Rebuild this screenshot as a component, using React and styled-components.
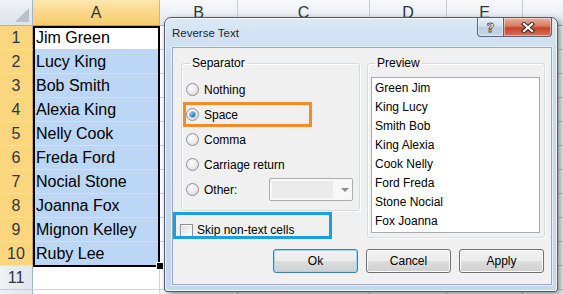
import React from 'react';
import styled, { createGlobalStyle } from 'styled-components';

const GlobalStyle = createGlobalStyle`
  html, body { margin: 0; padding: 0; width: 563px; height: 294px; overflow: hidden; background: #fff; }
  body { font-family: "Liberation Sans", Arial, sans-serif; }
  * { box-sizing: border-box; }
`;

const Page = styled.div`
  position: relative;
  width: 563px;
  height: 294px;
  overflow: hidden;
`;

/* ---------- spreadsheet ---------- */
const COLS = [33, 127, 78, 132, 77, 76, 110];
const LETTERS = ['A', 'B', 'C', 'D', 'E', ''];
const NAMES = ['Jim Green', 'Lucy King', 'Bob Smith', 'Alexia King', 'Nelly Cook', 'Freda Ford', 'Nocial Stone', 'Joanna Fox', 'Mignon Kelley', 'Ruby Lee'];

const Sheet = styled.div`
  position: relative;
  display: grid;
  grid-template-columns: ${COLS.map((c) => c + 'px').join(' ')};
  grid-template-rows: 26px repeat(12, 24px);
  width: max-content;
  font-family: "Liberation Sans", Arial, sans-serif;
`;

const Corner = styled.div`
  position: relative;
  background: linear-gradient(#eef1f5, #dde3ea);
  border-right: 1px solid #9eb6ce;
  border-bottom: 1px solid #9eb6ce;
  &::after {
    content: '';
    position: absolute;
    right: 3px;
    bottom: 3px;
    border-style: solid;
    border-width: 0 0 14px 14px;
    border-color: transparent transparent #b7c1cc transparent;
  }
`;

const ColHeader = styled.div`
  display: flex;
  align-items: center;
  justify-content: center;
  font-size: 16px;
  color: #2e3540;
  padding-top: 1px;
  border-right: 1px solid ${(p) => (p.$selected ? '#d8b76a' : '#c3ccd6')};
  border-bottom: 1px solid ${(p) => (p.$selected ? '#c8a050' : '#9eb6ce')};
  background: ${(p) =>
    p.$selected
      ? 'linear-gradient(#fde7b0, #f9d98d 45%, #f6cd6c)'
      : 'linear-gradient(#f7f9fb, #e3e8ee)'};
`;

const RowHeader = styled.div`
  display: flex;
  align-items: center;
  justify-content: center;
  font-size: 16px;
  color: #2e3540;
  border-right: 1px solid ${(p) => (p.$selected ? '#c8a35a' : '#9eb6ce')};
  border-bottom: 1px solid ${(p) => (p.$selected ? '#f3e3b6' : '#c3ccd6')};
  background: ${(p) => (p.$selected ? '#fbd67e' : 'linear-gradient(90deg, #eef1f5, #e2e7ed)')};
`;

const Cell = styled.div`
  display: flex;
  align-items: center;
  padding: 1px 0 0 3px;
  font-size: 16px;
  color: #000;
  white-space: nowrap;
  overflow: hidden;
  border-right: 1px solid #d4d4d4;
  border-bottom: 1px solid ${(p) => (p.$selected ? '#d9dfe6' : '#d4d4d4')};
  background: ${(p) => (p.$selected ? '#bcd7f5' : '#fff')};
`;

const SelectionOutline = styled.div`
  position: absolute;
  left: 33px;
  top: 26px;
  width: 127px;
  height: 241px;
  border: 2px solid #000;
  pointer-events: none;
`;

const FillHandle = styled.div`
  position: absolute;
  left: 157px;
  top: 263px;
  width: 6px;
  height: 6px;
  background: #000;
  outline: 1px solid #fff;
`;

/* ---------- dialog window ---------- */
const Window = styled.div`
  position: absolute;
  left: 164px;
  top: 17px;
  width: 394px;
  height: 275px;
  border: 1px solid #4f5b69;
  border-radius: 7px 7px 3px 3px;
  background: linear-gradient(#dbe8f6, #c8dbef 40px, #c3d7ed);
  box-shadow: inset 0 0 0 1px rgba(255, 255, 255, 0.75), 3px 3px 7px rgba(0, 0, 0, 0.45);
  padding: 0 5px 6px 7px;
  display: flex;
  flex-direction: column;
  font-family: "Liberation Sans", Arial, sans-serif;
  font-size: 12px;
  color: #000;
`;

const TitleBar = styled.div`
  height: 29px;
  display: flex;
  align-items: flex-start;
  justify-content: space-between;
`;

const Title = styled.div`
  margin-top: 9px;
  font-size: 11.5px;
  color: #1b2633;
`;

const CaptionGroup = styled.div`
  display: flex;
`;

const CaptionButton = styled.div`
  width: ${(p) => p.$w}px;
  height: 19px;
  display: flex;
  align-items: center;
  justify-content: center;
  border: 1px solid #56657a;
  border-top: none;
  border-left: ${(p) => (p.$first ? '1px solid #56657a' : 'none')};
  border-radius: ${(p) => (p.$first ? '0 0 0 4px' : '0 0 4px 0')};
  background: ${(p) =>
    p.$close
      ? 'linear-gradient(#eab0a0, #d77a63 45%, #c7432a 55%, #d7705a)'
      : 'linear-gradient(#e6eef7, #d3dfec 45%, #bccde1 55%, #c8d8ea)'};
  box-shadow: inset 0 0 0 1px rgba(255, 255, 255, 0.45);
`;

const HelpGlyph = styled.span`
  font-family: "DejaVu Sans", sans-serif;
  font-weight: bold;
  font-size: 13px;
  line-height: 1;
  color: #fff;
  -webkit-text-stroke: 0.8px #3e4a59;
`;

const Client = styled.div`
  flex: 1;
  background: #f0f0f0;
  border: 1px solid #98a8ba;
  box-shadow: 0 0 0 1px rgba(255, 255, 255, 0.55);
  padding: 8px 6px 0 8px;
  display: flex;
  flex-direction: column;
`;

const Columns = styled.div`
  display: flex;
  gap: 7px;
  align-items: flex-start;
`;

const Column = styled.div`
  display: flex;
  flex-direction: column;
  width: ${(p) => p.$w}px;
`;

const GroupBox = styled.fieldset`
  margin: 0;
  min-width: 0;
  width: 100%;
  height: ${(p) => p.$h}px;
  border: 1px solid #d3dce3;
  border-radius: 3px;
  box-shadow: inset 1px 1px 0 #fff, 1px 1px 0 #fff;
  padding: ${(p) => p.$pad};
`;

const Legend = styled.legend`
  font-size: 12px;
  line-height: 14px;
  padding: 0 2px;
  margin-left: 4px;
  color: #000;
`;

const OptionRow = styled.div`
  position: relative;
  height: 25px;
  display: flex;
  align-items: center;
  gap: 5px;
`;

const Radio = styled.span`
  width: 13px;
  height: 13px;
  flex: none;
  border-radius: 50%;
  border: 1px solid #8c8f94;
  background: radial-gradient(circle at 40% 35%, #ffffff, #e6e6e6 60%, #d0d0d0);
  display: flex;
  align-items: center;
  justify-content: center;
  &::after {
    content: '';
    display: ${(p) => (p.$checked ? 'block' : 'none')};
    width: 5px;
    height: 5px;
    border-radius: 50%;
    background: radial-gradient(circle at 35% 35%, #8fd3ff, #1878c8 60%, #0b4f8e);
    box-shadow: 0 0 0 1px rgba(30, 80, 140, 0.35);
  }
`;

const Highlight = styled.div`
  position: absolute;
  left: ${(p) => p.$x}px;
  top: ${(p) => p.$y}px;
  width: ${(p) => p.$w}px;
  height: ${(p) => p.$h}px;
  border: 3px solid ${(p) => p.$color};
  pointer-events: none;
`;

const Combo = styled.div`
  margin-left: auto;
  margin-right: 6px;
  width: 84px;
  height: 23px;
  border: 1px solid #acacac;
  border-radius: 2px;
  background: #f8f8f8;
  display: flex;
  align-items: center;
  padding: 2px;
`;

const ComboField = styled.span`
  width: 61px;
  height: 100%;
  background: #ebebeb;
`;

const ComboArrow = styled.span`
  margin-left: 8px;
  width: 0;
  height: 0;
  border-left: 4px solid transparent;
  border-right: 4px solid transparent;
  border-top: 4px solid #8a8a8a;
`;

const SkipRow = styled.div`
  position: relative;
  margin-top: 9px;
  margin-left: -1px;
  height: 20px;
  display: flex;
  align-items: center;
  gap: 4px;
`;

const Checkbox = styled.span`
  width: 13px;
  height: 13px;
  flex: none;
  border: 1px solid #8c8f94;
  background: linear-gradient(135deg, #dcdcdc, #f4f4f4 70%, #fff);
  box-shadow: inset 0 0 0 1px #f6f6f6;
`;

const ListBox = styled.div`
  height: 156px;
  background: #fff;
  border: 1px solid #a9abb0;
  padding: 1px 0 0 3px;
`;

const ListItem = styled.div`
  height: 19px;
  line-height: 19px;
  font-size: 12px;
  color: #000;
`;

const ButtonRow = styled.div`
  display: flex;
  justify-content: flex-end;
  gap: 8px;
  margin-top: 9px;
  padding-right: 1px;
`;

const Button = styled.div`
  width: 85px;
  height: 24px;
  display: flex;
  align-items: center;
  justify-content: center;
  font-size: 12px;
  color: #000;
  border: 1px solid ${(p) => (p.$default ? '#3c7fb1' : '#707070')};
  border-radius: 3px;
  background: linear-gradient(#f2f2f2, #ebebeb 50%, #dddddd 50%, #cfcfcf);
  box-shadow: inset 0 0 0 1px ${(p) => (p.$default ? '#9fd6f6' : '#fcfcfc')};
`;

const CloseIcon = () => (
  <svg width="14" height="11" viewBox="0 0 14 11">
    <path d="M3 2 L11 9 M11 2 L3 9" stroke="#3b2520" strokeWidth="4.2" strokeLinecap="square" />
    <path d="M3 2 L11 9 M11 2 L3 9" stroke="#fff" strokeWidth="2.2" strokeLinecap="square" />
  </svg>
);

const OPTIONS = ['Nothing', 'Space', 'Comma', 'Carriage return'];
const PREVIEW = ['Green Jim', 'King Lucy', 'Smith Bob', 'King Alexia', 'Cook Nelly', 'Ford Freda', 'Stone Nocial', 'Fox Joanna'];

export default function App() {
  const rows = [];
  for (let r = 1; r <= 12; r++) {
    const sel = r <= 10;
    rows.push(
      <RowHeader key={'h' + r} $selected={sel}>{r <= 11 ? r : ''}</RowHeader>
    );
    rows.push(
      <Cell key={'a' + r} $selected={r >= 2 && r <= 10}>{NAMES[r - 1] || ''}</Cell>
    );
    for (let c = 1; c < LETTERS.length; c++) {
      rows.push(<Cell key={r + '-' + c} />);
    }
  }

  return (
    <Page>
      <GlobalStyle />
      <Sheet>
        <Corner />
        {LETTERS.map((l, i) => (
          <ColHeader key={i} $selected={l === 'A'}>{l}</ColHeader>
        ))}
        {rows}
        <SelectionOutline />
        <FillHandle />
      </Sheet>

      <Window>
        <TitleBar>
          <Title>Reverse Text</Title>
          <CaptionGroup>
            <CaptionButton $w={27} $first>
              <HelpGlyph>?</HelpGlyph>
            </CaptionButton>
            <CaptionButton $w={48} $close>
              <CloseIcon />
            </CaptionButton>
          </CaptionGroup>
        </TitleBar>
        <Client>
          <Columns>
            <Column $w={179}>
              <GroupBox $h={155} $pad="7px 0 0 4px">
                <Legend>Separator</Legend>
                {OPTIONS.map((o) => (
                  <OptionRow key={o}>
                    <Radio $checked={o === 'Space'} />
                    <span>{o}</span>
                    {o === 'Space' && <Highlight $x={-3} $y={0} $w={129} $h={25} $color="#f68b26" />}
                  </OptionRow>
                ))}
                <OptionRow>
                  <Radio />
                  <span>Other:</span>
                  <Combo>
                    <ComboField />
                    <ComboArrow />
                  </Combo>
                </OptionRow>
              </GroupBox>
              <SkipRow>
                <Checkbox />
                <span>Skip non-text cells</span>
                <Highlight $x={-7} $y={-8} $w={159} $h={27} $color="#1a9fe2" />
              </SkipRow>
            </Column>
            <Column $w={178}>
              <GroupBox $h={182} $pad="7px 4px 0 3px">
                <Legend>Preview</Legend>
                <ListBox>
                  {PREVIEW.map((p) => (
                    <ListItem key={p}>{p}</ListItem>
                  ))}
                </ListBox>
              </GroupBox>
            </Column>
          </Columns>
          <ButtonRow>
            <Button $default>Ok</Button>
            <Button>Cancel</Button>
            <Button>Apply</Button>
          </ButtonRow>
        </Client>
      </Window>
    </Page>
  );
}
